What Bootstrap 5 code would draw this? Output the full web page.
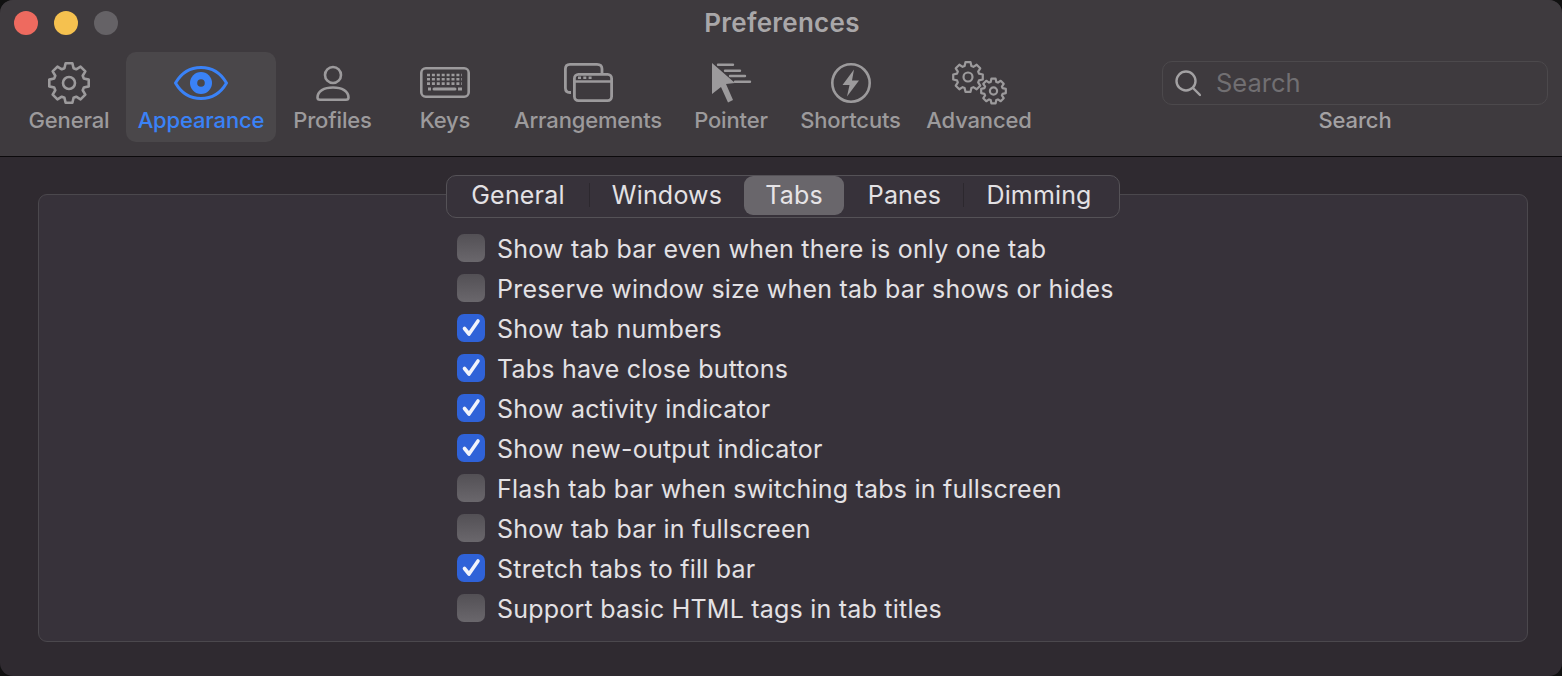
<!DOCTYPE html>
<html lang="en">
<head>
    <meta charset="UTF-8">
    <title>Preferences</title>
    <link href="https://cdn.jsdelivr.net/npm/bootstrap@5.3.2/dist/css/bootstrap.min.css" rel="stylesheet">
    <style>
        html, body { height: 100%; }
        body { background: #111; font-family: Inter, "Liberation Sans", sans-serif; overflow: hidden; }

        .prefWindow { height: 676px; background: #2f2a30; border-radius: 13px; overflow: hidden; }
        .toolBar { height: 157px; background: #3e3a3e; border-bottom: 1px solid #0c0a0c; }

        .titleRow { height: 52px; display: grid; grid-template-columns: 1fr auto 1fr; align-items: center; padding: 0 14px 6px; }
        .lights { display: flex; gap: 16px; }
        .light { width: 24px; height: 24px; border-radius: 50%; }
        .winTitle { font-size: 26px; font-weight: 600; line-height: 28px; margin-left: 2px; margin-bottom: 1px; color: #a9a7a9; letter-spacing: .25px; }

        .toolRow { display: flex; padding: 0 14px 0 12px; }
        .toolItem { height: 90px; display: flex; flex-direction: column; align-items: center; color: #9c9a9c; font-size: 22px; font-weight: 500; letter-spacing: -.15px; line-height: 28px; border-radius: 10px; text-decoration: none; }
        .toolItem svg { display: block; flex: none; width: 60px; height: 50px; margin-top: 4px; }
        .toolItem.current { background: #4a474a; color: #3a82f7; }

        .searchItem { width: 386px; margin-left: auto; display: flex; flex-direction: column; align-items: center; color: #a3a1a3; font-size: 22px; font-weight: 500; letter-spacing: -.15px; line-height: 28px; }
        .searchBox { width: 100%; height: 44px; margin: 9px 0 1px; padding: 0 12px; display: flex; align-items: center; gap: 15px; border: 1.5px solid #4c494c; border-radius: 10px; }
        .searchBox input { flex: 1; min-width: 0; background: transparent; border: 0; outline: 0; padding: 0; color: #ddd; font-size: 25.5px; }
        .searchBox input::placeholder { color: #716f72; opacity: 1; }

        .groupBox { margin: 37px 34px 0 38px; height: 448px; background: #37323a; border: 1.5px solid #4b484d; border-radius: 9px; }

        .tabStrip { width: 674px; height: 43px; margin: -20.500px auto 0 407px; padding: 0 0 2px; background: #37323a; border: 1.5px solid #555257; border-radius: 10px; flex-wrap: nowrap; }
        .tabStrip .nav-item { display: flex; align-items: center; }
        .tabStrip .nav-link { height: 39px; padding: 1px 0 0; display: flex; align-items: center; justify-content: center; color: #e3e1e4; font-size: 25px; letter-spacing: .2px; border-radius: 9px; }
        .tabStrip .nav-link.active { background: #69666b; color: #e6e4e7; }
        .tabStrip .nav-link.tabPanes { padding-left: 2px; }
        .tabStrip .nav-link.tabDim { padding-right: 4px; letter-spacing: .15px; }
        .tabSep { width: 1px; height: 24px; margin-top: 7px; background: #2c282e; }

        .optionList { margin: 11px 0 0 418px; }
        .optionList .form-check { display: flex; align-items: center; gap: 12px; height: 40px; min-height: 0; padding: 0; margin: 0; }
        .optionList .form-check-input { flex: none; float: none; width: 28px; height: 28px; margin: -2px 0 0; background-color: #5c595e; background-image: linear-gradient(#535055, #6a676c); border: 0; border-radius: 7px; }
        .optionList .form-check-input:checked { background-color: #2f62d8; background-image: url("data:image/svg+xml,%3Csvg xmlns='http://www.w3.org/2000/svg' viewBox='0 0 28 28'%3E%3Cpath d='M7.5 14.5l4.5 5.5 9-13' fill='none' stroke='%23f2f4fb' stroke-width='3.6' stroke-linecap='round' stroke-linejoin='round'/%3E%3C/svg%3E"); background-size: 100% 100%; }
        .optionList .form-check-label { color: #e3e1e4; font-size: 25px; letter-spacing: .22px; line-height: 40px; white-space: nowrap; opacity: 1 !important; }
    </style>
</head>
<body>
    <div class="prefWindow">
        <div class="toolBar">
            <div class="titleRow">
                <div class="lights">
                    <span class="light" style="background:#ee6a5f"></span>
                    <span class="light" style="background:#f5c14f"></span>
                    <span class="light" style="background:#656266"></span>
                </div>
                <div class="winTitle">Preferences</div>
                <div></div>
            </div>
            <div class="toolRow">
                <a class="toolItem" style="width:114px">
                    <svg viewBox="0 0 60 50" fill="none" stroke="currentColor" stroke-width="2.6">
                        <path class="gearShape" data-cx="30" data-cy="27" data-out="20" data-in="15.5"/>
                        <circle cx="30" cy="27" r="6"/>
                    </svg>
                    General
                </a>
                <a class="toolItem current" style="width:150px">
                    <svg viewBox="0 0 60 50" fill="none" stroke="currentColor" stroke-width="3">
                        <path d="M4.5 27C10 17.500 19 11.500 30 11.500S50 17.500 55.500 27C50 36.500 41 42.500 30 42.500S10 36.500 4.500 27Z" stroke-linejoin="round"/>
                        <circle cx="30" cy="27" r="11" fill="currentColor" stroke="none"/>
                        <circle cx="30" cy="27" r="3.800" fill="#4a474a" stroke="none"/>
                    </svg>
                    Appearance
                </a>
                <a class="toolItem" style="width:113px">
                    <svg viewBox="0 0 60 50" fill="none" stroke="currentColor" stroke-width="2.6">
                        <circle cx="30" cy="19" r="8"/>
                        <path d="M14.500 41.500C14.500 35 21 31.500 30 31.500S45.500 35 45.500 41.500C45.500 43 44.500 43.800 43 43.800H17C15.500 43.800 14.500 43 14.500 41.500Z"/>
                    </svg>
                    Profiles
                </a>
                <a class="toolItem" style="width:112px">
                    <svg viewBox="0 0 60 50" fill="none" stroke="currentColor" stroke-width="2.6">
                        <rect x="6.300" y="12.300" width="47.400" height="28.400" rx="4.500"/>
                        <path d="M12 19H47M12 23.300H47M12 27.600H47" stroke-width="2.600" stroke-dasharray="3 1.900"/>
                        <path d="M13 33H16M43 33H47" stroke-width="3"/>
                        <path d="M19 33H40" stroke-width="3" stroke-linecap="round"/>
                    </svg>
                    Keys
                </a>
                <a class="toolItem" style="width:174px">
                    <svg viewBox="0 0 60 50" fill="none" stroke="currentColor" stroke-width="2.8">
                        <path d="M13 36.500H12C9 36.500 7.400 34.500 7.400 32V13C7.400 10 9.400 8.400 12 8.400H39C42 8.400 44 10 44 13V17.500"/>
                        <rect x="16.400" y="18.400" width="37.200" height="26.200" rx="4"/>
                        <path d="M16.400 25.500H53.600" stroke-width="2.400"/>
                        <path d="M20 21.700H23M25.300 21.700H28.300M30.600 21.700H33.600" stroke-width="2.400"/>
                    </svg>
                    Arrangements
                </a>
                <a class="toolItem" style="width:112px">
                    <svg viewBox="0 0 60 50" fill="none" stroke="currentColor">
                        <path d="M11 7L34 27L25 28L32 44L27 46.500L20 31L11 38Z" fill="currentColor" stroke="none"/>
                        <path d="M17 8.700H32M24 14.700H39M29 20H44M34 25.700H49" stroke-width="2.400" stroke-linecap="round"/>
                    </svg>
                    Pointer
                </a>
                <a class="toolItem" style="width:127px">
                    <svg viewBox="0 0 60 50" fill="none" stroke="currentColor" stroke-width="2.600">
                        <circle cx="30" cy="27" r="18.700"/>
                        <path d="M33 13.500L21.500 29H28.500L26 40.500L38 24.500H31Z" fill="currentColor" stroke="none"/>
                    </svg>
                    Shortcuts
                </a>
                <a class="toolItem" style="width:130px">
                    <svg viewBox="0 0 60 50" fill="none" stroke="currentColor" stroke-width="2.200">
                        <path class="gearShape" data-cx="19" data-cy="21" data-out="15" data-in="11.500"/>
                        <circle cx="19" cy="21" r="4.500"/>
                        <path class="gearShape" data-cx="44.500" data-cy="35" data-out="12.500" data-in="9.500"/>
                        <circle cx="44.500" cy="35" r="3.600"/>
                    </svg>
                    Advanced
                </a>
                <div class="searchItem">
                    <div class="searchBox">
                        <svg width="26" height="28" viewBox="0 0 26 28" fill="none" stroke="#a3a1a3" stroke-width="2.400">
                            <circle cx="11" cy="12" r="9.500"/>
                            <path d="M18 19L25 26" stroke-linecap="round"/>
                        </svg>
                        <input type="text" placeholder="Search">
                    </div>
                    Search
                </div>
            </div>
        </div>

        <div class="groupBox">
            <ul class="nav tabStrip">
                <li class="nav-item"><a class="nav-link" style="width:142px">General</a></li>
                <li class="tabSep"></li>
                <li class="nav-item"><a class="nav-link" style="width:154px">Windows</a></li>
                <li class="nav-item"><a class="nav-link active" style="width:100px">Tabs</a></li>
                <li class="nav-item"><a class="nav-link tabPanes" style="width:119px">Panes</a></li>
                <li class="tabSep"></li>
                <li class="nav-item"><a class="nav-link tabDim" style="width:154px">Dimming</a></li>
            </ul>
            <div class="optionList" id="optionList"></div>
        </div>
    </div>

    <script>
        const opcoes = [
            ["Show tab bar even when there is only one tab", false],
            ["Preserve window size when tab bar shows or hides", false],
            ["Show tab numbers", true],
            ["Tabs have close buttons", true],
            ["Show activity indicator", true],
            ["Show new-output indicator", true],
            ["Flash tab bar when switching tabs in fullscreen", false],
            ["Show tab bar in fullscreen", false],
            ["Stretch tabs to fill bar", true],
            ["Support basic HTML tags in tab titles", false]
        ];

        let lista = document.getElementById("optionList");
        opcoes.forEach((opcao, index) => {
            let linha = document.createElement("div");
            linha.className = "form-check";
            linha.innerHTML = `<input class="form-check-input" type="checkbox" id="opt${index}" ${opcao[1] ? "checked" : ""}>
                <label class="form-check-label" for="opt${index}">${opcao[0]}</label>`;
            lista.appendChild(linha);
        });

        // gears are an 8 tooth outline, easier to compute than to write by hand
        document.querySelectorAll(".gearShape").forEach((el) => {
            let cx = +el.dataset.cx, cy = +el.dataset.cy, rOut = +el.dataset.out, rIn = +el.dataset.in;
            let d = "";
            for (let i = 0; i < 8; i++) {
                let a = i * Math.PI / 4 - Math.PI / 2;
                let pts = [[rIn, a - 0.3], [rOut, a - 0.17], [rOut, a + 0.17], [rIn, a + 0.3]];
                pts.forEach((p, j) => {
                    let x = (cx + p[0] * Math.cos(p[1])).toFixed(2);
                    let y = (cy + p[0] * Math.sin(p[1])).toFixed(2);
                    d += (i === 0 && j === 0 ? "M" : "L") + x + " " + y;
                });
            }
            el.setAttribute("d", d + "Z");
            el.setAttribute("stroke-linejoin", "round");
        });
    </script>
    <script src="https://cdn.jsdelivr.net/npm/bootstrap@5.3.2/dist/js/bootstrap.bundle.min.js"></script>
</body>
</html>
